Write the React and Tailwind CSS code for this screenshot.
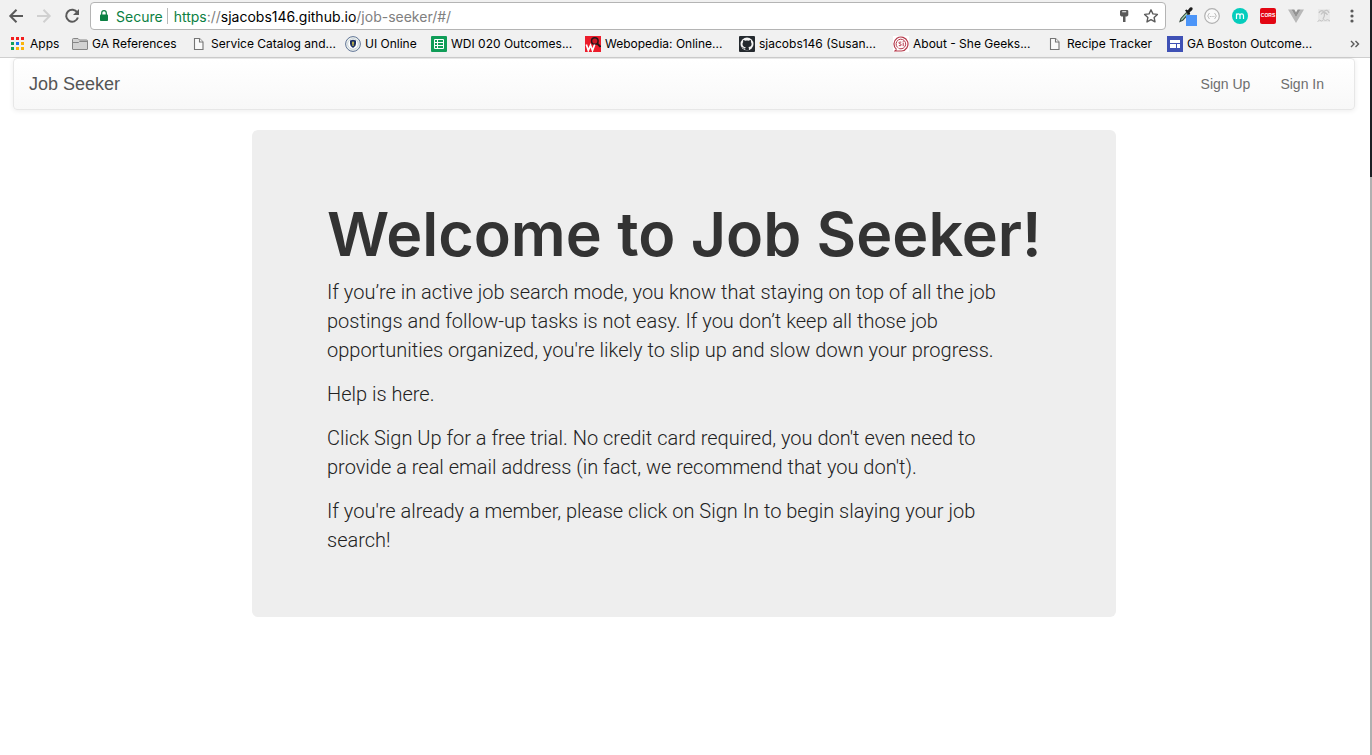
import React from 'react';

function BackIcon() {
  return (
    <svg width="16" height="16" viewBox="0 0 16 16" fill="none" stroke="currentColor" strokeWidth="2">
      <path d="M15 8H2.5M8.5 1.8 2.3 8l6.2 6.2" />
    </svg>
  );
}

function ForwardIcon() {
  return (
    <svg width="16" height="16" viewBox="0 0 16 16" fill="none" stroke="currentColor" strokeWidth="2">
      <path d="M1 8h12.500M7.500 1.800 13.700 8l-6.200 6.200" />
    </svg>
  );
}

function ReloadIcon() {
  return (
    <svg width="16" height="16" viewBox="0 0 16 16" fill="none">
      <path d="M13.300 4.600A6 6 0 1 0 13.900 9.500" stroke="currentColor" strokeWidth="2" />
      <path d="M15 1v6H9z" fill="currentColor" />
    </svg>
  );
}

function LockIcon() {
  return (
    <svg width="10" height="12" viewBox="0 0 10 12">
      <rect x="1" y="4.500" width="8" height="6.500" rx="0.800" fill="#0b8043" />
      <path d="M2.700 5V3a2.300 2.300 0 0 1 4.600 0v2" fill="none" stroke="#0b8043" strokeWidth="1.200" />
    </svg>
  );
}

function KeyIcon() {
  return (
    <svg width="14" height="14" viewBox="0 0 14 14">
      <path fillRule="evenodd" fill="#5a5a5a" d="M4 1h6.500l.8.800v4.400L10 7.500H8.500V13H6V7.500H4.300L3 6.200V2zM5.200 2.300v1h4v-1z" />
    </svg>
  );
}

function StarIcon() {
  return (
    <svg width="16" height="16" viewBox="0 0 16 16" fill="none" stroke="#5a5a5a" strokeWidth="1.400" strokeLinejoin="round">
      <path d="m8 1.800 1.900 4.100 4.500.500-3.300 3 .900 4.500L8 11.700l-4 2.200.900-4.500-3.300-3 4.500-.500z" />
    </svg>
  );
}

function AppsIcon() {
  const colors = ['#f31d1d', '#f31d1d', '#f31d1d', '#12a05c', '#1a73f0', '#fbb40a', '#12a05c', '#fbb40a', '#fbb40a'];
  return (
    <svg width="16" height="16" viewBox="0 0 16 16">
      {colors.map((c, i) => (
        <rect key={i} x={1 + (i % 3) * 5} y={1 + Math.floor(i / 3) * 5} width="3" height="3" fill={c} />
      ))}
    </svg>
  );
}

function FolderIcon() {
  return (
    <svg width="16" height="16" viewBox="0 0 16 16" fill="#d2d2d2" stroke="#868686">
      <path d="M.5 13V3.500q0-1 1-1h4.500l1.500 1.500h7q1 0 1 1V13q0 .5-.5.5H1q-.5 0-.5-.5z" />
      <path d="M.5 6.500h6l1-1h8" fill="none" />
    </svg>
  );
}

function PageIcon() {
  return (
    <svg width="16" height="16" viewBox="0 0 16 16" fill="#fafafa" stroke="#757575" strokeWidth="1.100">
      <path d="M3.500 2.500h5l3.500 3.500v7.500H3.500z" />
      <path d="M8.500 2.500V6H12" />
    </svg>
  );
}

function SealIcon() {
  return (
    <svg width="16" height="16" viewBox="0 0 16 16">
      <circle cx="8" cy="8" r="7.400" fill="#eef2ee" stroke="#5f7396" />
      <circle cx="8" cy="8" r="5.300" fill="#fff" stroke="#b9c4cf" strokeWidth="0.700" />
      <path d="M5 4.600 8 3.800l3 .8v3.200q0 2.800-3 4.200-3-1.400-3-4.200z" fill="#1c2f63" />
      <path d="M8 5.500v4.500M6.900 7h2.200" stroke="#d9c94c" strokeWidth="1.200" />
    </svg>
  );
}

function SheetIcon() {
  return (
    <svg width="16" height="16" viewBox="0 0 16 16">
      <rect width="16" height="16" rx="1" fill="#109d58" />
      <path d="M3.500 3.500h9v9h-9zM3.500 6.500h9M3.500 9.500h9M6.500 3.500v9" fill="none" stroke="#fff" />
    </svg>
  );
}

function WebopediaIcon() {
  return (
    <svg width="16" height="16" viewBox="0 0 16 16">
      <rect width="16" height="16" fill="#ec1c2b" />
      <circle cx="9.800" cy="5" r="3.300" fill="#c81824" stroke="#26161a" strokeWidth="1.500" />
      <path d="m12.200 7.500 3.300 3.300" stroke="#26161a" strokeWidth="2" />
      <path d="m1.300 8.500 2 6 2.200-5.200 2 5.200 2.200-6" fill="none" stroke="#fff" strokeWidth="1.700" />
    </svg>
  );
}

function GithubIcon() {
  return (
    <svg width="16" height="16" viewBox="0 0 16 16">
      <rect width="16" height="16" rx="1" fill="#24292e" />
      <circle cx="8" cy="8" r="6.500" fill="#f4f4f4" />
      <path
        fill="#24292e"
        d="M4.200 4q1.200 0 2 .7 1.800-.4 3.600 0 .8-.7 2-.7.4 1 .1 1.900.7.800.7 2 0 2.700-3.200 3.100.5.500.5 1.300v2.300H6.300v-1.500q-1.800.4-2.400-1-.3-.7-.9-1 1-.2 1.600.8.600.8 1.700.4.100-.7.500-1-3.300-.5-3.300-3.300 0-1.200.7-2-.3-1 0-2z"
      />
    </svg>
  );
}

function SheGeeksIcon() {
  return (
    <svg width="16" height="16" viewBox="0 0 16 16" fill="none" stroke="#b5394a">
      <rect width="16" height="16" fill="#fff" stroke="none" />
      <path d="M3.500 13.400A7 7 0 1 1 8.500 15H2l1.500-1.600" strokeWidth="1.200" />
      <path d="M4.600 11.500a4.800 4.800 0 1 1 3.400 1.300q-1.500 0-2.500-.6" />
      <path d="M8.300 6.200q-2.400-.7-2.400.6 0 .8 1.100 1 1.300.2 1.300 1.100 0 1.300-2.500.7M10.200 6.600v3.600" />
      <path d="M10.200 4.900v.9" />
    </svg>
  );
}

function SitesIcon() {
  return (
    <svg width="16" height="16" viewBox="0 0 16 16">
      <rect width="16" height="16" fill="#3f51b5" />
      <path d="M3 4h10v3H3zM3 8h6v4H3zM10 8h3v4h-3z" fill="#fff" />
    </svg>
  );
}

function EyedropperIcon() {
  return (
    <svg width="20" height="20" viewBox="0 0 20 20">
      <path d="m2 15.500 1-3 5.500-6 1.700 1.700-5.500 6z" fill="#9fd3b5" stroke="#36473e" strokeWidth="1.100" />
      <path d="m7 4.500 1.300-1 1.500.8L12 1.600q1.500-1 2.400.2.800 1.200-.4 2.400l-2.300 2 .5 1.800-1.200 1z" fill="#1b1b1b" />
      <rect x="8" y="9" width="11" height="11" fill="#4c95f8" />
    </svg>
  );
}

function BracesIcon() {
  return (
    <svg width="16" height="16" viewBox="0 0 16 16" fill="none" stroke="#b0b0b0">
      <circle cx="8" cy="8" r="7.300" fill="#f9f9f9" strokeWidth="1.200" />
      <path d="M5.500 5.500Q4.500 5.500 4.500 6.500T3.600 8q.9.500.9 1.500t1 1M10.500 5.500q1 0 1 1t.9 1.500q-.9.500-.9 1.500t-1 1" />
      <path d="M5.800 8.500h4.600" strokeDasharray="1 .8" />
    </svg>
  );
}

function MomentumIcon() {
  return (
    <svg width="16" height="16" viewBox="0 0 16 16">
      <circle cx="8" cy="8" r="8" fill="#05cdbd" />
      <path d="M4.500 11V5.600M4.500 7.500q0-1.700 1.700-1.700T8 7.500V11M8 7.500q0-1.700 1.700-1.700t1.800 1.700V11" fill="none" stroke="#fff" strokeWidth="1.200" />
    </svg>
  );
}

function VueIcon() {
  return (
    <svg width="16" height="16" viewBox="0 0 16 16">
      <path d="M0 1.500h3.500L8 9.200l4.500-7.700H16L8 15z" fill="#b8b8b8" />
      <path d="M3.500 1.500h2.800L8 4.500l1.700-3h2.800L8 9.200z" fill="#929292" />
    </svg>
  );
}

function PalmIcon() {
  return (
    <svg width="16" height="16" viewBox="0 0 16 16" fill="none" stroke="#c4c4c4">
      <rect x="2" y="1" width="12" height="13" fill="#e8e8e8" stroke="none" />
      <path d="M3 5q1.500-3.500 5-1.500Q11.500.5 13 5M5 6.500q1.500-2.500 3.500-2t3 2.500M8.500 4q.5 4-1.500 7" strokeWidth="1.300" />
      <path d="M1.500 13.500q2-2.500 4-.5 2-2.500 4-.5 2-2 4.500.5" />
    </svg>
  );
}

function MenuIcon() {
  return (
    <svg width="16" height="16" viewBox="0 0 16 16" fill="#5a5a5a">
      <circle cx="8" cy="3" r="1.600" />
      <circle cx="8" cy="8" r="1.600" />
      <circle cx="8" cy="13" r="1.600" />
    </svg>
  );
}

function MoreIcon() {
  return (
    <svg width="10" height="8" viewBox="0 0 10 8" fill="none" stroke="#5a5a5a" strokeWidth="1.400">
      <path d="m1 1 3 3-3 3M5.500 1l3 3-3 3" />
    </svg>
  );
}

function CorsIcon() {
  return (
    <span className="flex h-4 w-4 items-center justify-center rounded-xs bg-[#e30613] font-['Liberation_Sans'] text-[5px] font-bold text-white">
      CORS
    </span>
  );
}

const bookmarks = [
  { label: 'Apps', Icon: AppsIcon, width: 'w-[50px]' },
  { label: 'GA References', Icon: FolderIcon, width: 'w-[107px]' },
  { label: 'Service Catalog and...', Icon: PageIcon, width: 'w-[142px]' },
  { label: 'UI Online', Icon: SealIcon, width: 'w-[74px]' },
  { label: 'WDI 020 Outcomes...', Icon: SheetIcon, width: 'w-[142px]' },
  { label: 'Webopedia: Online...', Icon: WebopediaIcon, width: 'w-[142px]' },
  { label: 'sjacobs146 (Susan...', Icon: GithubIcon, width: 'w-[142px]' },
  { label: 'About - She Geeks...', Icon: SheGeeksIcon, width: 'w-[142px]' },
  { label: 'Recipe Tracker', Icon: PageIcon, width: 'w-[108px]' },
  { label: 'GA Boston Outcome...', Icon: SitesIcon, width: 'w-[148px]' },
];

const extensions = [
  { name: 'Color picker', Icon: EyedropperIcon, align: 'justify-end' },
  { name: 'JSON viewer', Icon: BracesIcon, align: 'justify-center' },
  { name: 'Momentum', Icon: MomentumIcon, align: 'justify-center' },
  { name: 'CORS', Icon: CorsIcon, align: 'justify-center' },
  { name: 'Vue devtools', Icon: VueIcon, align: 'justify-center' },
  { name: 'Palm', Icon: PalmIcon, align: 'justify-center' },
  { name: 'Menu', Icon: MenuIcon, align: 'justify-center' },
];

function Toolbar() {
  return (
    <div className="flex h-8 items-center pl-2 pr-1">
      <div className="flex items-center gap-3 text-[#5a5a5a]">
        <button aria-label="Back"><BackIcon /></button>
        <button aria-label="Forward" className="text-[#d0d0d0]"><ForwardIcon /></button>
        <button aria-label="Reload"><ReloadIcon /></button>
      </div>
      <div className="ml-2.5 flex h-7 flex-1 items-center rounded-sm border border-[#b4b4b4] bg-white pl-2 pr-1.5 font-['Inter',sans-serif] text-[14px]">
        <LockIcon />
        <span className="ml-[7px] text-[#0b8043]">Secure</span>
        <span className="ml-1 mr-1.5 h-4 w-px bg-[#b9b9b9]" />
        <a href="#/" className="flex-1 text-[#808080]">
          <span className="text-[#0b8043]">https</span>://<span className="text-black">sjacobs146.github.io</span>/job-seeker/#/
        </a>
        <button aria-label="Saved password"><KeyIcon /></button>
        <button aria-label="Bookmark this page" className="ml-3"><StarIcon /></button>
      </div>
      <div className="ml-1 flex items-center">
        {extensions.map(({ name, Icon, align }) => (
          <button key={name} aria-label={name} className={'flex w-7 ' + align}>
            <Icon />
          </button>
        ))}
      </div>
    </div>
  );
}

function BookmarksBar() {
  return (
    <nav className="flex h-6 items-center gap-3 pl-2.5 pr-2.5 font-['Inter',sans-serif] text-[12px] text-black">
      {bookmarks.map(({ label, Icon, width }) => (
        <a key={label} href="#/" className={'flex shrink-0 items-center gap-1 whitespace-nowrap ' + width}>
          <span className="shrink-0"><Icon /></span>
          {label}
        </a>
      ))}
      <button aria-label="More bookmarks" className="ml-auto"><MoreIcon /></button>
    </nav>
  );
}

export default function App() {
  return (
    <div className="flex min-h-screen bg-white">
      <div className="min-w-0 flex-1">
        <header className="border-b border-[#cfcfcf] bg-[#f1f1f1] pb-px">
          <Toolbar />
          <BookmarksBar />
        </header>
        <div className="pl-[13px] pr-[15px]">
          <nav className="flex h-[52px] items-center justify-between rounded-sm border border-[#e7e7e7] bg-linear-to-b from-white to-[#f8f8f8] pl-[15px] pr-[30px] font-['Liberation_Sans',sans-serif] text-[#6e6e6e] shadow-[0_1px_5px_rgba(0,0,0,0.075)]">
            <a href="#/" className="text-[18px] text-[#555]">Job Seeker</a>
            <div className="flex gap-[30px] text-[14px]">
              <a href="#/sign-up">Sign Up</a>
              <a href="#/sign-in">Sign In</a>
            </div>
          </nav>
          <main className="mx-auto mt-5 max-w-[864px] rounded-md bg-[#eee] px-[75px] pb-[62px] pt-[69px] text-[#333]">
            <h1 className="whitespace-nowrap font-['Inter',sans-serif] text-[61px] font-semibold leading-[70px]">Welcome to Job Seeker!</h1>
            <div className="mt-[9px] flex flex-col gap-[15px] font-['Roboto',sans-serif] text-[20px] font-light leading-[29px] text-[#222]">
              <p>
                If you’re in active job search mode, you know that staying on top of all the job postings and follow-up tasks is not easy. If you don’t keep all those job opportunities organized, you're likely to slip up and slow down your progress.
              </p>
              <p>Help is here.</p>
              <p>
                Click Sign Up for a free trial. No credit card required, you don't even need to provide a real email address (in fact, we recommend that you don't).
              </p>
              <p>If you're already a member, please click on Sign In to begin slaying your job search!</p>
            </div>
          </main>
        </div>
      </div>
      <div className="flex w-0.5 flex-col bg-[#b0b0b0]">
        <div className="h-[177px] bg-[#1c1f24]" />
      </div>
    </div>
  );
}
